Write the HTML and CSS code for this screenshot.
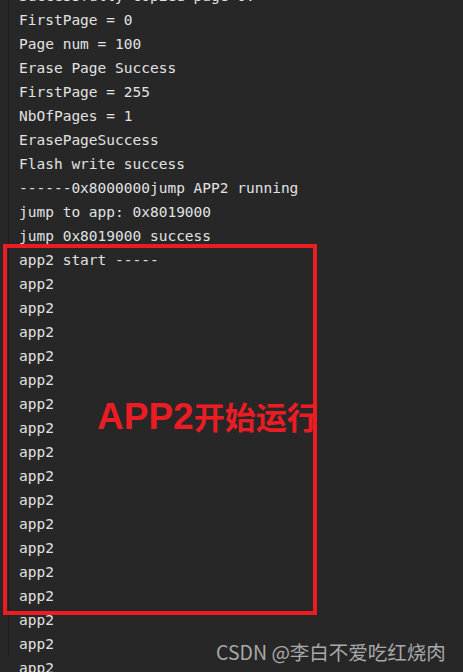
FILE: index.html
```html
<!DOCTYPE html>
<html lang="en">
<head>
	<meta charset="UTF-8" name="viewport" content="width=device-width" />
	<title>serial log</title>
	<link rel="stylesheet" href="styles.css">
</head>
<body>
	<div class="console">
		<div class="log">
			<div class="line">Successfully copied page 0.</div>
			<div class="line">FirstPage = 0</div>
			<div class="line">Page num = 100</div>
			<div class="line">Erase Page Success</div>
			<div class="line">FirstPage = 255</div>
			<div class="line">NbOfPages = 1</div>
			<div class="line">ErasePageSuccess</div>
			<div class="line">Flash write success</div>
			<div class="line">------0x8000000jump APP2 running</div>
			<div class="line">jump to app: 0x8019000</div>
			<div class="line">jump 0x8019000 success</div>
			<div class="line">app2 start -----</div>
			<div class="line">app2</div>
			<div class="line">app2</div>
			<div class="line">app2</div>
			<div class="line">app2</div>
			<div class="line">app2</div>
			<div class="line">app2</div>
			<div class="line">app2</div>
			<div class="line">app2</div>
			<div class="line">app2</div>
			<div class="line">app2</div>
			<div class="line">app2</div>
			<div class="line">app2</div>
			<div class="line">app2</div>
			<div class="line">app2</div>
			<div class="line">app2</div>
			<div class="line">app2</div>
			<div class="line">app2</div>
		</div>
	</div>
	<div class="mark-box"></div>
	<div class="mark-text"><span class="latin">APP2</span>开始运行</div>
	<div class="watermark">CSDN @李白不爱吃红烧肉</div>
</body>
</html>
```

FILE: styles.css
```css
html, body {
	margin: 0;
	height: 100%;
	overflow: hidden;
	background: #272727;
}
.console {
	margin-left: 8px;
	border-left: 1px solid #1d1d1d;
	height: 100%;
	padding-left: 10px;
}
.log {
	margin-top: -16px;
	font-family: "DejaVu Sans Mono", monospace;
	font-size: 14.5px;
	line-height: 24px;
	color: #e2e2e2;
}
.line {
	white-space: pre;
	height: 24px;
}
.mark-box {
	position: absolute;
	left: 3px;
	top: 244px;
	width: 306px;
	height: 363px;
	border: 4px solid #ec1c24;
}
.mark-text {
	position: absolute;
	left: 97px;
	top: 396px;
	font-family: "Noto Sans CJK SC", sans-serif;
	font-weight: bold;
	font-size: 31px;
	line-height: 40px;
	color: #ec1c24;
}
.mark-text .latin {
	font-family: "Liberation Sans", sans-serif;
	font-size: 37px;
}
.watermark {
	position: absolute;
	left: 216px;
	top: 638px;
	font-family: "Noto Sans CJK SC", sans-serif;
	font-size: 19.5px;
	line-height: 28px;
	color: #a9a9a9;
}
```
